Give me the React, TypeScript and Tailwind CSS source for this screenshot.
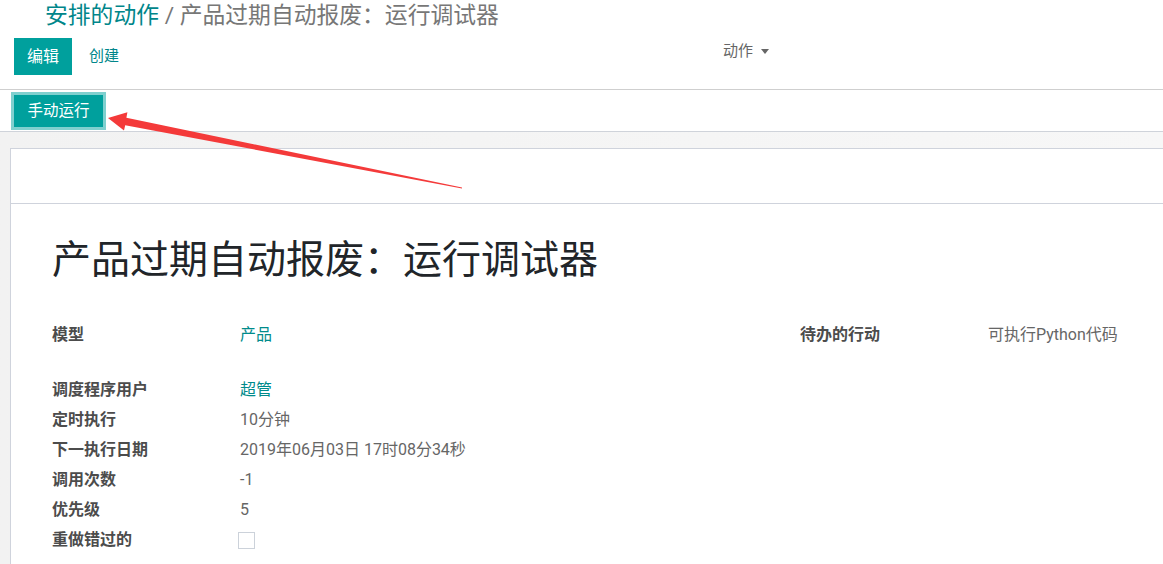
import React from "react";

const leftRows: { label: string; value: React.ReactNode }[] = [
    { label: "调度程序用户", value: <span className="text-[#008b8b]">超管</span> },
    { label: "定时执行", value: "10分钟" },
    { label: "下一执行日期", value: "2019年06月03日 17时08分34秒" },
    { label: "调用次数", value: "-1" },
    { label: "优先级", value: "5" },
    {
        label: "重做错过的",
        value: <span className="mt-[7px] ml-[-2px] block h-[17px] w-[17px] border border-[#ccd2da] bg-white" />,
    },
];

const Arrow = () => (
    <svg className="pointer-events-none absolute left-0 top-0" width="1163" height="564" viewBox="0 0 1163 564">
        <polygon
            points="108,118 127.4,112.2 126.4,117.8 462,187.4 462,188.6 125.2,125.2 124,130.6"
            fill="#f43a3a"
        />
    </svg>
);

const App = () => {
    return (
        <div
            className="relative h-[564px] w-[1163px] overflow-hidden bg-white text-[16px] text-[#666]"
            style={{ fontFamily: 'Roboto, "Noto Sans CJK SC", sans-serif' }}
        >
            {/* control panel */}
            <div className="h-[90px] border-b border-[#cfcfcf]">
                <div className="pl-[45px] pt-[1px] text-[22.8px] leading-[30px]">
                    <span className="text-[#00868a]">安排的动作</span>
                    <span className="text-[#777]"> / 产品过期自动报废：运行调试器</span>
                </div>
                <div className="mt-[7px] flex items-center pl-[14px]">
                    <button className="h-[37px] w-[58px] bg-[#00a09d] text-[16px] text-white">编辑</button>
                    <button className="ml-[17px] text-[15px] text-[#00868a]">创建</button>
                    <div className="ml-[604px] mt-[-10px] flex items-center gap-[8px] text-[15px] text-[#666]">
                        动作
                        <span className="h-0 w-0 border-x-[4.5px] border-t-[5px] border-x-transparent border-t-[#666]" />
                    </div>
                </div>
            </div>

            {/* header / statusbar */}
            <div className="h-[42px] border-b border-[#cfd3da] pl-[11px] pt-[2px]">
                <button className="h-[38px] w-[95px] border-[3px] border-[#7fd0cf] bg-[#00a09d] pt-[2px] text-[15.5px] text-white">
                    手动运行
                </button>
            </div>

            {/* sheet area */}
            <div className="h-[433px] bg-gradient-to-r from-[#f2f2f2] to-[#f7f7f7] pl-[10px] pt-[16px]">
                <div className="h-[600px] border-l border-t border-[#cfd3dc] bg-white">
                    <div className="h-[55px] border-b border-[#cfd3dc]" />
                    <div className="pl-[41px]">
                        <h1 className="mt-[32px] text-[39px] leading-[48px] text-[#212529]">
                            产品过期自动报废：运行调试器
                        </h1>
                        <div className="mt-[36px] flex">
                            <div className="flex w-[748px]">
                                <div className="w-[188px] font-bold text-[#4c4c4c] leading-[30px]">模型</div>
                                <div className="leading-[30px] text-[#008b8b]">产品</div>
                            </div>
                            <div className="flex">
                                <div className="w-[188px] font-bold text-[#4c4c4c] leading-[30px]">待办的行动</div>
                                <div className="leading-[30px]">可执行Python代码</div>
                            </div>
                        </div>
                        <div className="mt-[25px]">
                            {leftRows.map((r) => (
                                <div key={r.label} className="flex h-[30px] leading-[30px]">
                                    <div className="w-[188px] font-bold text-[#4c4c4c]">{r.label}</div>
                                    <div>{r.value}</div>
                                </div>
                            ))}
                        </div>
                    </div>
                </div>
            </div>

            <Arrow />
        </div>
    );
};

export default App;
